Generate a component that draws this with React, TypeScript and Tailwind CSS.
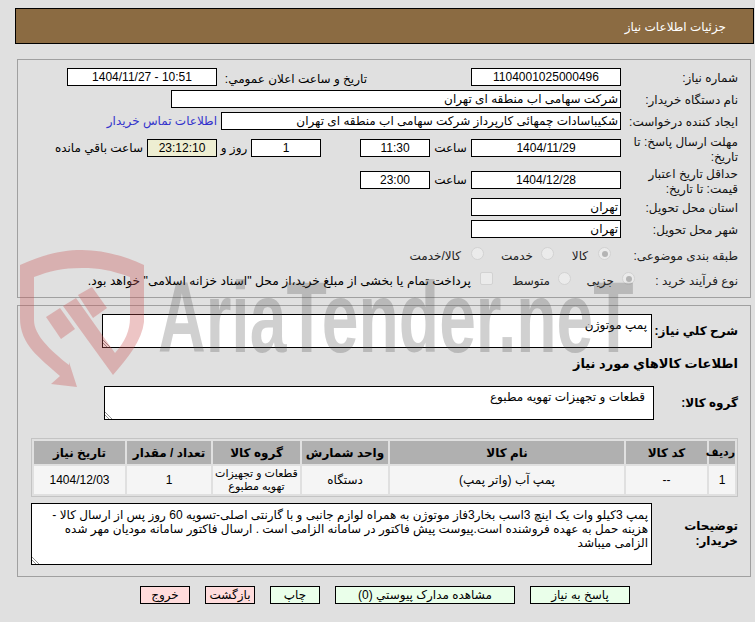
const font = "font-['Liberation_Sans','DejaVu_Sans',sans-serif]";

function Box({ w, center, children, bg, ltr }: { w: string; center?: boolean; children?: React.ReactNode; bg?: string; ltr?: boolean }) {
  return (
    <div
      dir={ltr ? 'ltr' : undefined}
      className={`h-[18px] shrink-0 border border-black px-[2px] text-[12px] leading-[16px] whitespace-nowrap overflow-hidden ${w} ${bg || 'bg-white'} ${center ? 'text-center' : ''}`}
    >
      {children}
    </div>
  );
}

function Label({ children }: { children: React.ReactNode }) {
  return <div className="w-[117px] shrink-0 pt-[3px] text-[12px] leading-[15px] text-[#111]">{children}</div>;
}

function Radio({ checked }: { checked?: boolean }) {
  return (
    <span className="-mt-[5px] flex h-[13px] w-[13px] shrink-0 items-center justify-center rounded-full border border-[#d2d2d2] bg-[#ebebeb]">
      {checked && <span className="h-[6px] w-[6px] rounded-full bg-[#b4b4b4]" />}
    </span>
  );
}

function Grip() {
  return (
    <svg width="8" height="8" viewBox="0 0 8 8" className="absolute bottom-0 left-0">
      <path d="M0 1 L7 8 M0 4 L4 8" stroke="#777" strokeWidth="0.8" />
    </svg>
  );
}

// logo + name sit on top of the form, see-through
function Watermark() {
  return (
    <div dir="ltr" className="pointer-events-none absolute top-0 left-0 z-10 h-[622px] w-[755px] overflow-hidden">
      <svg width="140" height="145" viewBox="15 245 140 145" className="absolute top-[245px] left-[15px]">
        <g fill="rgb(200,80,80)" fillOpacity="0.33">
          <path d="M20 265 C45 254 62 250 82 250 C102 250 122 255 144 265 L144 322 C142 340 128 358 113 375 L63 306 L76 298 L115 353 C125 342 130 330 130 318 L130 277 C110 270 100 268 82 268 C62 268 50 271 34 277 L34 320 C34 335 50 350 69 365 L69 362 L77 387 L51 384 L60 376 C40 358 20 345 20 318 Z" />
          <path d="M46 317 L60 308 L75 329 L61 339 Z" />
          <path d="M78 295 L92 287 L107 308 L93 318 Z" />
        </g>
      </svg>
      <span className="absolute top-[262px] left-[158px] origin-left scale-x-[0.66] text-[100px] leading-[110px] font-bold whitespace-nowrap text-[#444444]/25 font-['Liberation_Sans',sans-serif]">
        AriaTender.neT
      </span>
    </div>
  );
}

export default function App() {
  return (
    <div dir="rtl" className={`relative h-[622px] w-[755px] overflow-hidden bg-[#e0e0e0] text-black ${font}`}>
      <div className="flex flex-col pt-[8px] pr-[1px] pl-[15px]">
        <div className="flex h-[36px] items-center border border-black bg-[#8b6b42] pt-[2px] pr-[27px] text-[12px] text-white">
          جزئیات اطلاعات نیاز
        </div>

        <div className="mt-[15px] mr-[3px] ml-[2px] flex h-[239px] flex-col border border-[#a0a0a0] pt-[8px] pr-[12px]">
          <div className="flex h-[18px] items-center">
            <Label>شماره نیاز:</Label>
            <Box w="w-[150px]" center>1104001025000496</Box>
            <div className="w-[104px] shrink-0" />
            <div className="w-[150px] shrink-0 pt-[3px] text-[12px] whitespace-nowrap">تاریخ و ساعت اعلان عمومي:</div>
            <Box w="w-[150px]" center ltr>1404/11/27 - 10:51</Box>
          </div>
          <div className="mt-[4px] flex h-[18px] items-center">
            <Label>نام دستگاه خریدار:</Label>
            <Box w="w-[450px]">شرکت سهامی اب منطقه ای تهران</Box>
          </div>
          <div className="mt-[4px] flex h-[18px] items-center">
            <Label>ایجاد کننده درخواست:</Label>
            <Box w="w-[400px]">شکیباسادات چمهائی کارپرداز شرکت سهامی اب منطقه ای تهران</Box>
            <span className="mr-[4px] text-[12px] whitespace-nowrap text-[#3333cc]">اطلاعات تماس خریدار</span>
          </div>
          <div className="mt-[9px] flex h-[18px] items-center">
            <Label>مهلت ارسال پاسخ: تا تاریخ:</Label>
            <Box w="w-[150px]" center>1404/11/29</Box>
            <span className="w-[41px] shrink-0 text-center text-[12px]">ساعت</span>
            <Box w="w-[70px]" center>11:30</Box>
            <div className="w-[39px] shrink-0" />
            <Box w="w-[70px]" center>1</Box>
            <span className="w-[34px] shrink-0 text-center text-[12px]">روز و</span>
            <Box w="w-[70px]" center bg="bg-[#eeeed2]">23:12:10</Box>
            <span className="mr-[4px] text-[12px] whitespace-nowrap">ساعت باقي مانده</span>
          </div>
          <div className="mt-[14px] flex h-[18px] items-center">
            <Label>حداقل تاریخ اعتبار قیمت: تا تاریخ:</Label>
            <Box w="w-[150px]" center>1404/12/28</Box>
            <span className="w-[41px] shrink-0 text-center text-[12px]">ساعت</span>
            <Box w="w-[70px]" center>23:00</Box>
          </div>
          <div className="mt-[9px] flex h-[18px] items-center">
            <Label>استان محل تحویل:</Label>
            <Box w="w-[150px]">تهران</Box>
          </div>
          <div className="mt-[4px] flex h-[18px] items-center">
            <Label>شهر محل تحویل:</Label>
            <Box w="w-[150px]">تهران</Box>
          </div>
          <div className="mt-[9px] flex h-[18px] items-center text-[12px] text-[#222]">
            <div className="w-[127px] shrink-0 whitespace-nowrap">طبقه بندی موضوعی:</div>
            <Radio checked />
            <span className="w-[44px] shrink-0 pr-[10px]">کالا</span>
            <Radio />
            <span className="w-[57px] shrink-0 pr-[8px]">خدمت</span>
            <Radio />
            <span className="pr-[10px] whitespace-nowrap">کالا/خدمت</span>
          </div>
          <div className="mt-[7px] flex h-[18px] items-center text-[12px] text-[#222]">
            <div className="w-[103px] shrink-0 whitespace-nowrap">نوع فرآیند خرید :</div>
            <Radio checked />
            <span className="w-[51px] shrink-0 pr-[8px]">جزیی</span>
            <Radio />
            <span className="w-[65px] shrink-0 pr-[8px]">متوسط</span>
            <span className="-mt-[5px] h-[13px] w-[13px] shrink-0 rounded-[2px] border border-[#d2d2d2] bg-[#ebebeb]" />
            <span className="mr-[9px] text-[12.3px] whitespace-nowrap text-black">
              پرداخت تمام یا بخشی از مبلغ خرید،از محل "اسناد خزانه اسلامی" خواهد بود.
            </span>
          </div>
        </div>

        <div className="mt-[7px] mr-[3px] ml-[2px] flex h-[272px] flex-col border border-[#a0a0a0] pt-[8px] pr-[12px]">
          <div className="flex h-[34px] items-center">
            <div className="w-[86px] shrink-0 text-[12px] font-bold whitespace-nowrap">شرح کلي نیاز:</div>
            <div className="relative h-[34px] w-[550px] border border-black bg-white pt-[1px] pr-[4px] text-[12px]">
              پمپ موتوژن
              <Grip />
            </div>
          </div>
          <div className="mt-[6px] h-[20px] text-[13px] leading-[20px] font-bold">اطلاعات کالاهاي مورد نیاز</div>
          <div className="mt-[12px] flex h-[34px] items-center">
            <div className="w-[84px] shrink-0 text-[12px] font-bold">گروه کالا:</div>
            <div className="relative h-[34px] w-[550px] border border-black bg-white pt-[1px] pr-[8px] text-[12px]">
              قطعات و تجهیزات تهویه مطبوع
              <Grip />
            </div>
          </div>

          <table className="mt-[18px] w-[707px] table-fixed border-separate border-spacing-[2px] border border-[#c4c4c4] text-center text-[12px]">
            <thead>
              <tr className="h-[23px] bg-[#b0b0b0] text-[12px]">
                <th className="w-[26px] p-0 text-[11px] font-bold">ردیف</th>
                <th className="w-[81px] p-0 font-bold">کد کالا</th>
                <th className="w-[234px] p-0 font-bold">نام کالا</th>
                <th className="w-[86px] p-0 font-bold">واحد شمارش</th>
                <th className="w-[87px] p-0 font-bold">گروه کالا</th>
                <th className="w-[84px] p-0 font-bold">تعداد / مقدار</th>
                <th className="w-[91px] p-0 font-bold">تاریخ نیاز</th>
              </tr>
            </thead>
            <tbody>
              <tr className="h-[28px] bg-[#f5f5f5]">
                <td className="p-0">1</td>
                <td className="p-0">--</td>
                <td className="p-0">پمپ آب (واتر پمپ)</td>
                <td className="p-0">دستگاه</td>
                <td className="p-0 text-[11px] leading-[13px] whitespace-nowrap">
                  قطعات و تجهیزات
                  <br />
                  تهویه مطبوع
                </td>
                <td className="p-0">1</td>
                <td className="p-0">1404/12/03</td>
              </tr>
            </tbody>
          </table>

          <div className="mt-[6px] flex h-[62px] items-center">
            <div className="w-[86px] shrink-0 text-[12px] leading-[15px] font-bold">توضیحات خریدار:</div>
            <div className="relative h-[62px] w-[621px] border border-black bg-white px-[3px] pt-[4px] text-[12px] leading-[14px]">
              پمپ 3کیلو وات یک اینچ 3اسب بخار3فاز موتوژن به همراه لوازم جانبی و با گارنتی اصلی-تسویه 60 روز پس از ارسال کالا -
              هزینه حمل به عهده فروشنده است.پیوست پیش فاکتور در سامانه الزامی است . ارسال فاکتور سامانه مودیان مهر شده
              الزامی میباشد
              <Grip />
            </div>
          </div>
        </div>

        <div className="mt-[9px] flex gap-[15px] pr-[124px] text-[12px]">
          <button className="h-[18px] w-[100px] border border-black bg-[#eaffea] leading-[16px]">پاسخ به نیاز</button>
          <button className="h-[18px] w-[180px] border border-black bg-[#eaffea] leading-[16px]">مشاهده مدارک پیوستي (0)</button>
          <button className="h-[18px] w-[50px] border border-black bg-[#eaffea] leading-[16px]">چاپ</button>
          <button className="h-[18px] w-[50px] border border-black bg-[#ffdcdc] leading-[16px]">بازگشت</button>
          <button className="h-[18px] w-[50px] border border-black bg-[#ffdcdc] leading-[16px]">خروج</button>
        </div>
      </div>
      <Watermark />
    </div>
  );
}
